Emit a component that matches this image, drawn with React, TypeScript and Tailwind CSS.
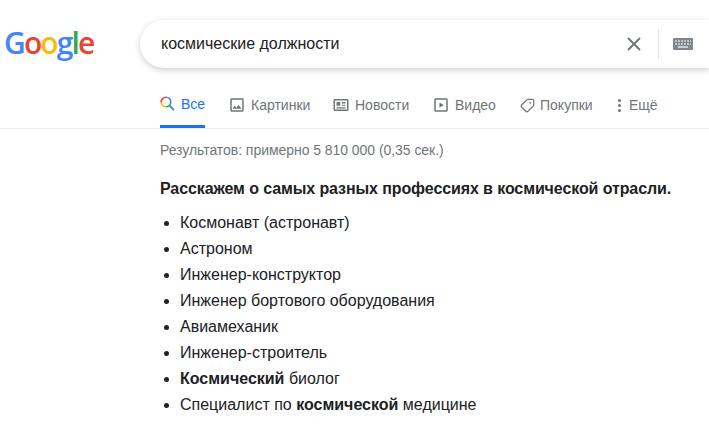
import * as React from 'react';
import { Tag, X } from 'lucide-react';

const ImageIcon = () => (
	<svg width="18" height="18" viewBox="0 0 24 24" fill="currentColor" className="-ml-[2px]">
		<path d="M19 5v14H5V5h14m0-2H5c-1.1 0-2 .9-2 2v14c0 1.1.9 2 2 2h14c1.1 0 2-.9 2-2V5c0-1.1-.9-2-2-2zm-4.86 8.86l-3 3.87L9 13.14 6 17h12l-3.86-5.14z" />
	</svg>
);

const NewsIcon = () => (
	<svg width="18" height="18" viewBox="0 0 24 24" fill="currentColor" className="-ml-[2px]">
		<path d="M20 6v12H4V6h16m0-2H4c-1.1 0-2 .9-2 2v12c0 1.1.9 2 2 2h16c1.1 0 2-.9 2-2V6c0-1.1-.9-2-2-2z" />
		<path d="M6 8h5v5H6zM13 8h5v2h-5zM13 11.5h5v1.5h-5zM6 15h12v1.5H6z" />
	</svg>
);

const VideoIcon = () => (
	<svg width="18" height="18" viewBox="0 0 24 24" fill="currentColor" className="-ml-[2px]">
		<path d="M19 5v14H5V5h14m0-2H5c-1.1 0-2 .9-2 2v14c0 1.1.9 2 2 2h14c1.1 0 2-.9 2-2V5c0-1.1-.9-2-2-2z" />
		<path d="M10 8.5v7l5.5-3.5z" />
	</svg>
);

const LabelIcon = () => <Tag size={15} strokeWidth={2} className="-scale-x-100" />;

const tabs = [
	{ label: 'Картинки', icon: ImageIcon, width: 'w-[104px]' },
	{ label: 'Новости', icon: NewsIcon, width: 'w-[100px]' },
	{ label: 'Видео', icon: VideoIcon, width: 'w-[86px]' },
	{ label: 'Покупки', icon: LabelIcon, width: 'w-[99px]' },
];

const ColorSearch = () => (
	<svg width="15" height="15" viewBox="0 0 15 15" fill="none" strokeWidth="1.7">
		<path d="M6 1.2A4.8 4.8 0 0 0 1.2 6" stroke="#ea4335" />
		<path d="M1.2 6A4.8 4.8 0 0 0 6 10.8" stroke="#fbbc05" />
		<path d="M6 10.8A4.8 4.8 0 0 0 10.8 6" stroke="#34a853" />
		<path d="M10.8 6A4.8 4.8 0 0 0 6 1.2" stroke="#4285f4" />
		<path d="M9.6 9.6L14 14" stroke="#4285f4" strokeWidth="2" />
	</svg>
);

const Keyboard = () => (
	<svg width="20" height="12" viewBox="0 0 20 12" className="text-[#80868b]">
		<rect width="20" height="12" rx="1" fill="currentColor" />
		<path
			d="M2 3h2M5 3h2M8 3h2M11 3h2M14 3h2M17 3h1M2 6h2M5 6h2M8 6h2M11 6h2M14 6h2M17 6h1"
			stroke="#fff"
			strokeWidth="1.2"
		/>
		<path d="M5 9h10" stroke="#fff" strokeWidth="1.2" />
	</svg>
);

const Ritem = ({ children }: { children: React.ReactNode }) => (
	<li className="h-[26px] leading-[26px]">{children}</li>
);

const App = () => {
	return (
		<div className="h-[430px] w-[709px] overflow-hidden bg-white font-['Liberation_Sans',Arial,sans-serif]">
			<div className="flex h-[88px] pt-5">
				<div className="w-[140px] pl-[4px] pt-[3px] font-['Open_Sans',sans-serif] text-[30px] font-semibold leading-[40px] tracking-[-1.9px]">
					<span className="text-[#4285f4]">G</span>
					<span className="text-[#ea4335]">o</span>
					<span className="text-[#fbbc05]">o</span>
					<span className="text-[#4285f4]">g</span>
					<span className="text-[#34a853]">l</span>
					<span className="text-[#ea4335]">e</span>
				</div>
				<div className="flex h-[48px] w-[569px] items-center rounded-l-[24px] bg-white pl-[21px] shadow-[0_2px_6px_rgba(32,33,36,0.22)]">
					<span className="flex-1 text-base text-[#222]">космические должности</span>
					<X size={22} strokeWidth={2} className="mr-[13px] text-[#70757a]" />
					<div className="mr-[14px] h-[30px] w-px bg-[#dfe1e5]" />
					<div className="mr-[16px] flex">
						<Keyboard />
					</div>
				</div>
			</div>
			<div className="flex h-[41px] border-b border-[#ebebeb] pl-[160px] text-sm text-[#70757a]">
				<div className="mr-[25px] flex h-[40px] w-[45px] items-center gap-[6px] border-b-[3px] border-[#1a73e8] pb-[6px] text-[#1a73e8]">
					<ColorSearch />
					<span>Все</span>
				</div>
				{tabs.map((tab) => (
					<div key={tab.label} className={`flex h-[34px] items-center gap-[5px] ${tab.width}`}>
						<tab.icon />
						<span>{tab.label}</span>
					</div>
				))}
				<div className="-ml-[1px] flex h-[34px] items-center gap-[8px]">
					<span className="flex flex-col gap-[2px]">
						<span className="size-[3px] rounded-full bg-[#70757a]" />
						<span className="size-[3px] rounded-full bg-[#70757a]" />
						<span className="size-[3px] rounded-full bg-[#70757a]" />
					</span>
					<span>Ещё</span>
				</div>
			</div>
			<div className="pl-[160px]">
				<div className="pt-[12px] text-sm leading-[18px] tracking-[-0.05px] text-[#70757a]">
					Результатов: примерно 5 810 000 (0,35 сек.)
				</div>
				<div className="pt-[20px] text-base font-bold leading-[20px] tracking-[-0.1px] text-[#202124]">
					Расскажем о самых разных профессиях в космической отрасли.
				</div>
				<ul className="list-disc pl-[20px] pt-[11px] text-base text-[#202124]">
					<Ritem>Космонавт (астронавт)</Ritem>
					<Ritem>Астроном</Ritem>
					<Ritem>Инженер-конструктор</Ritem>
					<Ritem>Инженер бортового оборудования</Ritem>
					<Ritem>Авиамеханик</Ritem>
					<Ritem>Инженер-строитель</Ritem>
					<Ritem>
						<b>Космический</b> биолог
					</Ritem>
					<Ritem>
						Специалист по <b>космической</b> медицине
					</Ritem>
				</ul>
			</div>
		</div>
	);
};

export default App;
